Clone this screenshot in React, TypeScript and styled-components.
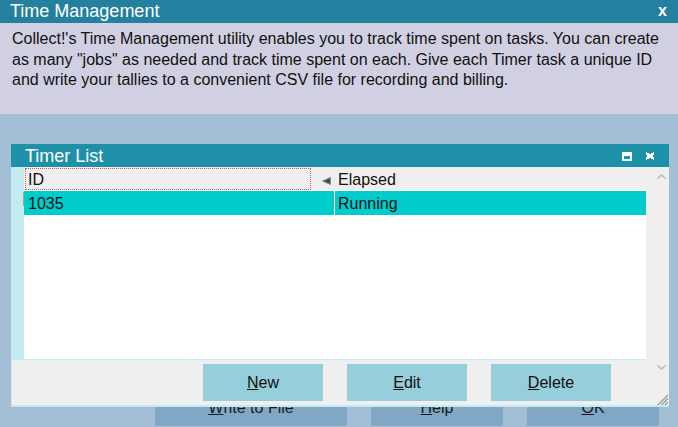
import React from "react";
import styled, { createGlobalStyle } from "styled-components";

const GlobalStyle = createGlobalStyle`
  html, body { margin: 0; padding: 0; }
  body {
    width: 678px;
    height: 427px;
    overflow: hidden;
    background: #a4bed6;
    font-family: "Liberation Sans", Arial, sans-serif;
  }
  * { box-sizing: border-box; }
`;

const Screen = styled.div`
  width: 678px;
  height: 427px;
  display: flex;
  flex-direction: column;
`;

const MainTitleBar = styled.div`
  height: 23px;
  flex: none;
  background: #23809f;
  color: #ffffff;
  font-size: 18px;
  display: flex;
  align-items: center;
  justify-content: space-between;
  padding: 0 11px 0 10px;
`;

const MainClose = styled.span`
  font-size: 16px;
  font-weight: bold;
  line-height: 1;
  margin-top: -2px;
`;

const Description = styled.div`
  height: 91px;
  flex: none;
  background: #d0d0e2;
  color: #101010;
  font-size: 16px;
  line-height: 20.5px;
  padding: 6px 12px 0;
`;

const DescLine = styled.span`
  display: block;
  white-space: nowrap;
`;

const Desktop = styled.div`
  flex: 1;
  position: relative;
  display: flex;
  flex-direction: column;
  justify-content: flex-end;
  padding-bottom: 1px;
`;

const BackButtonRow = styled.div`
  display: flex;
  justify-content: flex-end;
  gap: 24px;
  padding-right: 19px;
`;

const BackButton = styled.div<{ $w: number }>`
  width: ${(p) => p.$w}px;
  height: 37px;
  background: #80a8c4;
  color: #1a1a1a;
  font-size: 16px;
  display: flex;
  align-items: center;
  justify-content: center;
`;

const TimerWindow = styled.div`
  position: absolute;
  left: 11px;
  top: 30px;
  width: 658px;
  background: #c4eaf2;
  display: flex;
  flex-direction: column;
`;

const WindowTitleBar = styled.div`
  height: 23px;
  background: #1e91a8;
  color: #ffffff;
  font-size: 18px;
  display: flex;
  align-items: center;
  padding: 1px 14px 0 14px;
`;

const TitleIcons = styled.div`
  margin-left: auto;
  display: flex;
  align-items: center;
  gap: 13px;
`;

const WindowBody = styled.div`
  display: grid;
  grid-template-columns: 12px 622px 23px;
  grid-template-rows: 192px 1px 45px;
  padding: 0 0 2px 1px;
`;

const ListArea = styled.div`
  grid-area: 1 / 2 / 2 / 3;
  background: #ffffff;
  display: flex;
  flex-direction: column;
  gap: 1px;
`;

const HeaderRow = styled.div`
  height: 23px;
  background: #efefef;
  display: grid;
  grid-template-columns: 310px 312px;
  font-size: 16px;
  color: #101010;
`;

const HeaderCell = styled.div`
  display: flex;
  align-items: center;
`;

const FocusedLabel = styled.div`
  width: 286px;
  height: 22px;
  margin: 1px 0 0 1px;
  border: 1px dotted #e05050;
  padding: 2px 0 0 2px;
  display: flex;
  align-items: center;
`;

const SortArrow = styled.svg`
  margin-left: auto;
  margin-right: 3px;
  margin-top: 5px;
`;

const HeaderText = styled.div`
  padding: 2px 0 0 4px;
  display: flex;
  align-items: center;
`;

const DataRow = styled.div`
  position: relative;
  height: 24px;
  background: #00cccc;
  display: grid;
  grid-template-columns: 310px 312px;
  font-size: 16px;
  color: #101010;
  &::before {
    content: "";
    position: absolute;
    left: -1px;
    top: 1px;
    width: 1px;
    height: 14px;
    background: #a8a870;
  }
`;

const Cell = styled.div<{ $divider?: boolean }>`
  display: flex;
  align-items: center;
  padding-top: 1px;
  padding-left: ${(p) => (p.$divider ? 3 : 4)}px;
  border-left: ${(p) => (p.$divider ? "1px solid #ffffff" : "none")};
`;

const ScrollBar = styled.div`
  grid-area: 1 / 3 / 4 / 4;
  background: #efefef;
  display: flex;
  flex-direction: column;
  align-items: flex-start;
  padding: 7px 0 0 11px;
`;

const DownChevron = styled.svg`
  margin-top: auto;
`;

const Grip = styled.svg`
  margin-top: 24px;
`;

const ButtonBar = styled.div`
  grid-area: 3 / 1 / 4 / 3;
  background: #efefef;
  display: flex;
  align-items: center;
  justify-content: flex-end;
  gap: 24px;
  padding-right: 35px;
`;

const ActionButton = styled.button`
  width: 120px;
  height: 37px;
  border: none;
  background: #96cedb;
  color: #101010;
  font-family: "Liberation Sans", Arial, sans-serif;
  font-size: 16px;
  padding: 0;
  cursor: pointer;
`;

const Key = styled.span`
  text-decoration: underline;
`;

function Label({ text }: { text: string }) {
  return (
    <>
      <Key>{text[0]}</Key>
      {text.slice(1)}
    </>
  );
}

export default function App() {
  return (
    <>
      <GlobalStyle />
      <Screen>
        <MainTitleBar>
          <span>Time Management</span>
          <MainClose>x</MainClose>
        </MainTitleBar>
        <Description>
          <DescLine>
            Collect!'s Time Management utility enables you to track time spent on tasks. You can create
          </DescLine>
          <DescLine>
            as many "jobs" as needed and track time spent on each. Give each Timer task a unique ID
          </DescLine>
          <DescLine>and write your tallies to a convenient CSV file for recording and billing.</DescLine>
        </Description>
        <Desktop>
          <BackButtonRow>
            <BackButton $w={192}>
              <Label text="Write to File" />
            </BackButton>
            <BackButton $w={132}>
              <Label text="Help" />
            </BackButton>
            <BackButton $w={132}>
              <Label text="OK" />
            </BackButton>
          </BackButtonRow>

          <TimerWindow>
            <WindowTitleBar>
              <span>Timer List</span>
              <TitleIcons>
                <svg width="10" height="9" viewBox="0 0 10 9">
                  <path d="M0 0H10V9H0Z M2 4V7H8V4Z" fill="#ffffff" fillRule="evenodd" />
                </svg>
                <svg width="10" height="8" viewBox="0 0 10 8" shapeRendering="crispEdges">
                  <path d="M1 1L9 7M9 1L1 7" stroke="#ffffff" strokeWidth="2.4" />
                </svg>
              </TitleIcons>
            </WindowTitleBar>
            <WindowBody>
              <ListArea>
                <HeaderRow>
                  <HeaderCell>
                    <FocusedLabel>ID</FocusedLabel>
                    <SortArrow width="9" height="8" viewBox="0 0 9 8">
                      <path d="M8.5 0.5L0.5 4L8.5 7.5Z" fill="#4a4a4a" stroke="#8a8a8a" strokeWidth="1" />
                    </SortArrow>
                  </HeaderCell>
                  <HeaderText>Elapsed</HeaderText>
                </HeaderRow>
                <DataRow>
                  <Cell>1035</Cell>
                  <Cell $divider>Running</Cell>
                </DataRow>
              </ListArea>
              <ScrollBar>
                <svg width="9" height="5" viewBox="0 0 9 5">
                  <path d="M0.5 4.5L4.5 1L8.5 4.5" fill="none" stroke="#b8b8b8" strokeWidth="1.5" />
                </svg>
                <DownChevron width="9" height="5" viewBox="0 0 9 5">
                  <path d="M0.5 0.5L4.5 4L8.5 0.5" fill="none" stroke="#b8b8b8" strokeWidth="1.5" />
                </DownChevron>
                <Grip width="11" height="11" viewBox="0 0 11 11">
                  <path d="M11 1L1 11M11 4.5L4.5 11M11 8L8 11" stroke="#9a9a9a" strokeWidth="1.3" />
                </Grip>
              </ScrollBar>
              <ButtonBar>
                <ActionButton>
                  <Label text="New" />
                </ActionButton>
                <ActionButton>
                  <Label text="Edit" />
                </ActionButton>
                <ActionButton>
                  <Label text="Delete" />
                </ActionButton>
              </ButtonBar>
            </WindowBody>
          </TimerWindow>
        </Desktop>
      </Screen>
    </>
  );
}
